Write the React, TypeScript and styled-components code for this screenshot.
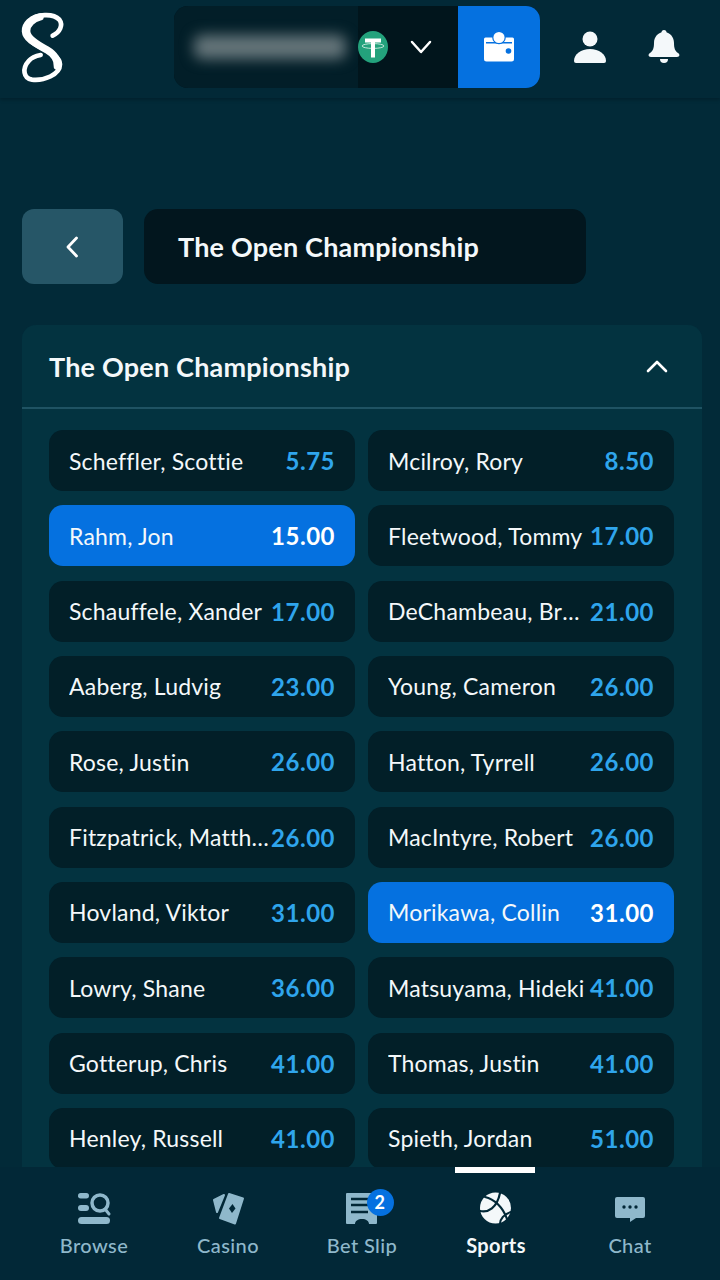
import React from 'react'
import styled, { createGlobalStyle } from 'styled-components'

const GlobalStyle = createGlobalStyle`
html, body {
  margin: 0;
  padding: 0;
  background: #022a38;
}
* { box-sizing: border-box; }
`

const Page = styled.div`
  width: 720px;
  height: 1280px;
  display: flex;
  flex-direction: column;
  overflow: hidden;
  background: #022a38;
  color: #f4f8fa;
  font-family: "Lato", "Open Sans", sans-serif;
`

const Header = styled.header`
  height: 98px;
  flex: none;
  display: flex;
  align-items: center;
  padding: 0 0 4px 10px;
  background: #022937;
  box-shadow: 0 2px 3px rgba(0, 20, 30, 0.35);
`

const Logo = styled.svg`
  width: 70px;
  height: 85px;
  margin-right: 94px;
`

const WalletPill = styled.div`
  width: 366px;
  height: 82px;
  display: flex;
  align-items: center;
  border-radius: 14px;
  overflow: hidden;
  background: #01151c;
`

const BalanceArea = styled.div`
  width: 184px;
  height: 100%;
  display: flex;
  align-items: center;
  padding-left: 20px;
  background: #021e28;
`

const BlurredBalance = styled.div`
  width: 152px;
  height: 24px;
  border-radius: 8px;
  background: #65757a;
  filter: blur(7px);
`

const Coin = styled.svg`
  width: 30px;
  height: 32px;
  flex: none;
`

const Chevron = styled.svg`
  width: 24px;
  height: 16px;
  margin-left: 21px;
  flex: none;
`

const WalletButton = styled.div`
  width: 82px;
  height: 100%;
  margin-left: auto;
  display: flex;
  align-items: center;
  justify-content: center;
  background: #0571e0;
`

const HeaderIcons = styled.div`
  display: flex;
  gap: 42px;
  margin-left: 34px;
`

const Main = styled.main`
  flex: 1;
  min-height: 0;
  overflow: hidden;
  padding: 111px 18px 0 22px;
`

const TitleRow = styled.div`
  display: flex;
  gap: 21px;
  margin-bottom: 41px;
`

const BackButton = styled.div`
  width: 101px;
  height: 75px;
  display: flex;
  align-items: center;
  justify-content: center;
  padding-right: 2px;
  border-radius: 12px;
  background: #265667;
`

const TitlePill = styled.div`
  width: 442px;
  height: 75px;
  display: flex;
  align-items: center;
  padding-left: 34px;
  border-radius: 14px;
  background: #02161e;
  font-size: 27px;
  font-weight: 700;
  letter-spacing: 0.2px;
`

const Card = styled.section`
  border-radius: 14px;
  background: #033340;
`

const CardHeader = styled.div`
  height: 84px;
  display: flex;
  align-items: center;
  justify-content: space-between;
  padding: 0 34px 0 27px;
  border-bottom: 2px solid #1f5363;
  font-size: 27px;
  font-weight: 700;
  letter-spacing: 0.2px;
`

const Grid = styled.div`
  display: grid;
  grid-template-columns: 306px 306px;
  grid-auto-rows: 61px;
  column-gap: 13px;
  row-gap: 14.33px;
  padding: 21px 27px;
`

const Selection = styled.div<{ $selected?: boolean }>`
  display: flex;
  align-items: center;
  justify-content: space-between;
  gap: 2px;
  padding: 0 20px;
  border-radius: 14px;
  background: ${p => (p.$selected ? '#0571e0' : '#021f28')};
`

const Name = styled.span`
  flex: 1;
  min-width: 0;
  overflow: hidden;
  white-space: nowrap;
  text-overflow: ellipsis;
  font-size: 23px;
  letter-spacing: 0.2px;
`

const Odds = styled.span<{ $selected?: boolean }>`
  flex: none;
  font-size: 24px;
  font-weight: 700;
  letter-spacing: 0.5px;
  color: ${p => (p.$selected ? '#ffffff' : '#2fa5ec')};
`

const Nav = styled.nav`
  height: 113px;
  flex: none;
  display: flex;
  padding: 0 27px;
  background: #022837;
`

const NavItem = styled.div<{ $active?: boolean }>`
  position: relative;
  flex: none;
  width: 134px;
  display: flex;
  flex-direction: column;
  align-items: center;
  gap: 5px;
  padding-top: 21px;
  font-size: 20px;
  line-height: 24px;
  letter-spacing: 0.4px;
  font-weight: ${p => (p.$active ? 700 : 500)};
  color: ${p => (p.$active ? '#f4f8fa' : '#8fb8cb')};

  &::before {
    content: '';
    display: ${p => (p.$active ? 'block' : 'none')};
    position: absolute;
    top: 0;
    left: 26px;
    width: 80px;
    height: 6px;
    background: #ffffff;
  }
`

const NavIcon = styled.div`
  position: relative;
  width: 40px;
  height: 40px;
  color: inherit;
`

const Badge = styled.span`
  position: absolute;
  left: 24.5px;
  top: 0.5px;
  width: 27px;
  height: 27px;
  display: flex;
  align-items: center;
  justify-content: center;
  border-radius: 50%;
  background: #0571e0;
  color: #ffffff;
  font-size: 18px;
  font-weight: 700;
`

const runners: { name: string; odds: string; selected?: boolean }[] = [
  { name: 'Scheffler, Scottie', odds: '5.75' },
  { name: 'Mcilroy, Rory', odds: '8.50' },
  { name: 'Rahm, Jon', odds: '15.00', selected: true },
  { name: 'Fleetwood, Tommy', odds: '17.00' },
  { name: 'Schauffele, Xander', odds: '17.00' },
  { name: 'DeChambeau, Bryson', odds: '21.00' },
  { name: 'Aaberg, Ludvig', odds: '23.00' },
  { name: 'Young, Cameron', odds: '26.00' },
  { name: 'Rose, Justin', odds: '26.00' },
  { name: 'Hatton, Tyrrell', odds: '26.00' },
  { name: 'Fitzpatrick, Matthew', odds: '26.00' },
  { name: 'MacIntyre, Robert', odds: '26.00' },
  { name: 'Hovland, Viktor', odds: '31.00' },
  { name: 'Morikawa, Collin', odds: '31.00', selected: true },
  { name: 'Lowry, Shane', odds: '36.00' },
  { name: 'Matsuyama, Hideki', odds: '41.00' },
  { name: 'Gotterup, Chris', odds: '41.00' },
  { name: 'Thomas, Justin', odds: '41.00' },
  { name: 'Henley, Russell', odds: '41.00' },
  { name: 'Spieth, Jordan', odds: '51.00' },
]

const BrowseIcon = () => (
  <svg width="40" height="40" viewBox="0 0 40 40" fill="currentColor">
    <rect x="4" y="5" width="11" height="5.5" rx="2.7" />
    <rect x="4" y="17" width="11" height="6" rx="3" />
    <rect x="4" y="29" width="32" height="7" rx="3.5" />
    <circle cx="26" cy="15" r="8" fill="none" stroke="currentColor" strokeWidth="3.5" />
    <path d="M31 21l4 5" stroke="currentColor" strokeWidth="3" strokeLinecap="round" />
  </svg>
)

const CasinoIcon = () => (
  <svg width="40" height="40" viewBox="0 0 40 40" fill="currentColor">
    <path d="M6 12L16 7 9 24z" stroke="currentColor" strokeWidth="2" strokeLinejoin="round" />
    <path d="M21 6l14 4.500-8 25-15-5.500z" stroke="currentColor" strokeWidth="2" strokeLinejoin="round" />
    <path d="M24.500 16l3 4.500-3.500 4.500-3-4.500z" fill="#022837" />
  </svg>
)

const BetSlipIcon = () => (
  <svg width="40" height="40" viewBox="0 0 40 40" fill="currentColor">
    <path d="M5 5h29a1 1 0 0 1 1 1v29a1 1 0 0 1-1 1h-7c0-3-3-5-7-5s-7 2-7 5H5a1 1 0 0 1-1-1V6a1 1 0 0 1 1-1z" />
    <path d="M9 11h17M9 17h17M9 24h17" stroke="#022837" strokeWidth="2.6" />
  </svg>
)

const SportsIcon = () => (
  <svg width="40" height="40" viewBox="0 0 40 40">
    <circle cx="19.500" cy="20" r="15.500" fill="currentColor" />
    <g fill="none" stroke="#022837" strokeWidth="2.200" strokeLinecap="round">
      <path d="M9 9c9 2 18 10 22 22" />
      <path d="M4 23c8 2 17-3 20-18" />
      <path d="M24 36c0-5 4-10 11-12" />
    </g>
  </svg>
)

const ChatIcon = () => (
  <svg width="40" height="40" viewBox="0 0 40 40" fill="currentColor">
    <path d="M7 9h26a2 2 0 0 1 2 2v17a2 2 0 0 1-2 2h-7l-6 4v-4H7a2 2 0 0 1-2-2V11a2 2 0 0 1 2-2z" />
    <circle cx="14" cy="19" r="1.700" fill="#022837" />
    <circle cx="20" cy="19" r="1.700" fill="#022837" />
    <circle cx="26" cy="19" r="1.700" fill="#022837" />
  </svg>
)

const App: React.FC = () => {
  return (
    <Page>
      <GlobalStyle />
      <Header>
        <Logo viewBox="0 0 210 255" fill="none">
          <g stroke="#ffffff" strokeLinecap="round" strokeLinejoin="round">
            <path
              d="M128 92C150 82 160 60 148 44C130 24 80 26 56 48C36 68 38 90 60 108C90 130 150 148 150 178C150 210 100 228 66 224C40 220 36 190 56 168C66 156 80 152 92 150"
              strokeWidth="14"
            />
            <path d="M90 36C70 40 50 56 50 78C50 100 80 118 110 134C130 146 144 160 142 184" strokeWidth="22" />
          </g>
        </Logo>
        <WalletPill>
          <BalanceArea>
            <BlurredBalance />
          </BalanceArea>
          <Coin viewBox="0 0 30 32">
            <ellipse cx="15" cy="16" rx="15" ry="16" fill="#23a27c" />
            <ellipse cx="15" cy="15" rx="11" ry="2.400" fill="none" stroke="#bfe6d8" strokeWidth="1" />
            <path d="M7 7.500h16v4h-6v15h-4v-15H7z" fill="#ffffff" />
          </Coin>
          <Chevron viewBox="0 0 24 16" fill="none">
            <path d="M3 3l9 10 9-10" stroke="#ffffff" strokeWidth="2.500" strokeLinecap="round" strokeLinejoin="round" />
          </Chevron>
          <WalletButton>
            <svg width="32" height="32" viewBox="0 0 32 32" fill="#ffffff">
              <path d="M2.500 6.500h27a1.500 1.500 0 0 1 1.500 1.500v20a2.500 2.500 0 0 1-2.500 2.500h-25A2.500 2.500 0 0 1 1 28V8a1.500 1.500 0 0 1 1.500-1.500z" />
              <rect x="3" y="11" width="26" height="1.500" fill="#0571e0" />
              <circle cx="16" cy="6.500" r="6.200" stroke="#0571e0" strokeWidth="1.200" />
              <circle cx="25.500" cy="20" r="2.800" fill="#0571e0" />
            </svg>
          </WalletButton>
        </WalletPill>
        <HeaderIcons>
          <svg width="32" height="34" viewBox="0 0 32 34" fill="#f4f8fa">
            <circle cx="16" cy="9" r="7.500" />
            <path d="M0 31c0-7 7-12 16-12s16 5 16 12a2 2 0 0 1-2 2H2a2 2 0 0 1-2-2z" />
          </svg>
          <svg width="32" height="34" viewBox="0 0 32 34" fill="#f4f8fa">
            <circle cx="16" cy="2.500" r="2.500" />
            <path d="M16 2c6 0 10 5 10 11 0 5 1 8 4 10 2 1 2 4-1 4H3c-3 0-3-3-1-4 3-2 4-5 4-10C6 7 10 2 16 2z" />
            <path d="M12 29h8a4 4 0 0 1-8 0z" />
          </svg>
        </HeaderIcons>
      </Header>

      <Main>
        <TitleRow>
          <BackButton>
            <svg width="14" height="24" viewBox="0 0 14 24" fill="none">
              <path d="M11.500 3L3 12l8.500 9" stroke="#ffffff" strokeWidth="2.800" strokeLinecap="round" strokeLinejoin="round" />
            </svg>
          </BackButton>
          <TitlePill>The Open Championship</TitlePill>
        </TitleRow>

        <Card>
          <CardHeader>
            The Open Championship
            <svg width="22" height="14" viewBox="0 0 22 14" fill="none">
              <path d="M2 12l9-9 9 9" stroke="#ffffff" strokeWidth="2.600" strokeLinecap="round" strokeLinejoin="round" />
            </svg>
          </CardHeader>
          <Grid>
            {runners.map(r => (
              <Selection key={r.name} $selected={r.selected}>
                <Name>{r.name}</Name>
                <Odds $selected={r.selected}>{r.odds}</Odds>
              </Selection>
            ))}
          </Grid>
        </Card>
      </Main>

      <Nav>
        <NavItem>
          <NavIcon><BrowseIcon /></NavIcon>
          Browse
        </NavItem>
        <NavItem>
          <NavIcon><CasinoIcon /></NavIcon>
          Casino
        </NavItem>
        <NavItem>
          <NavIcon>
            <BetSlipIcon />
            <Badge>2</Badge>
          </NavIcon>
          Bet Slip
        </NavItem>
        <NavItem $active>
          <NavIcon><SportsIcon /></NavIcon>
          Sports
        </NavItem>
        <NavItem>
          <NavIcon><ChatIcon /></NavIcon>
          Chat
        </NavItem>
      </Nav>
    </Page>
  )
}

export default App
